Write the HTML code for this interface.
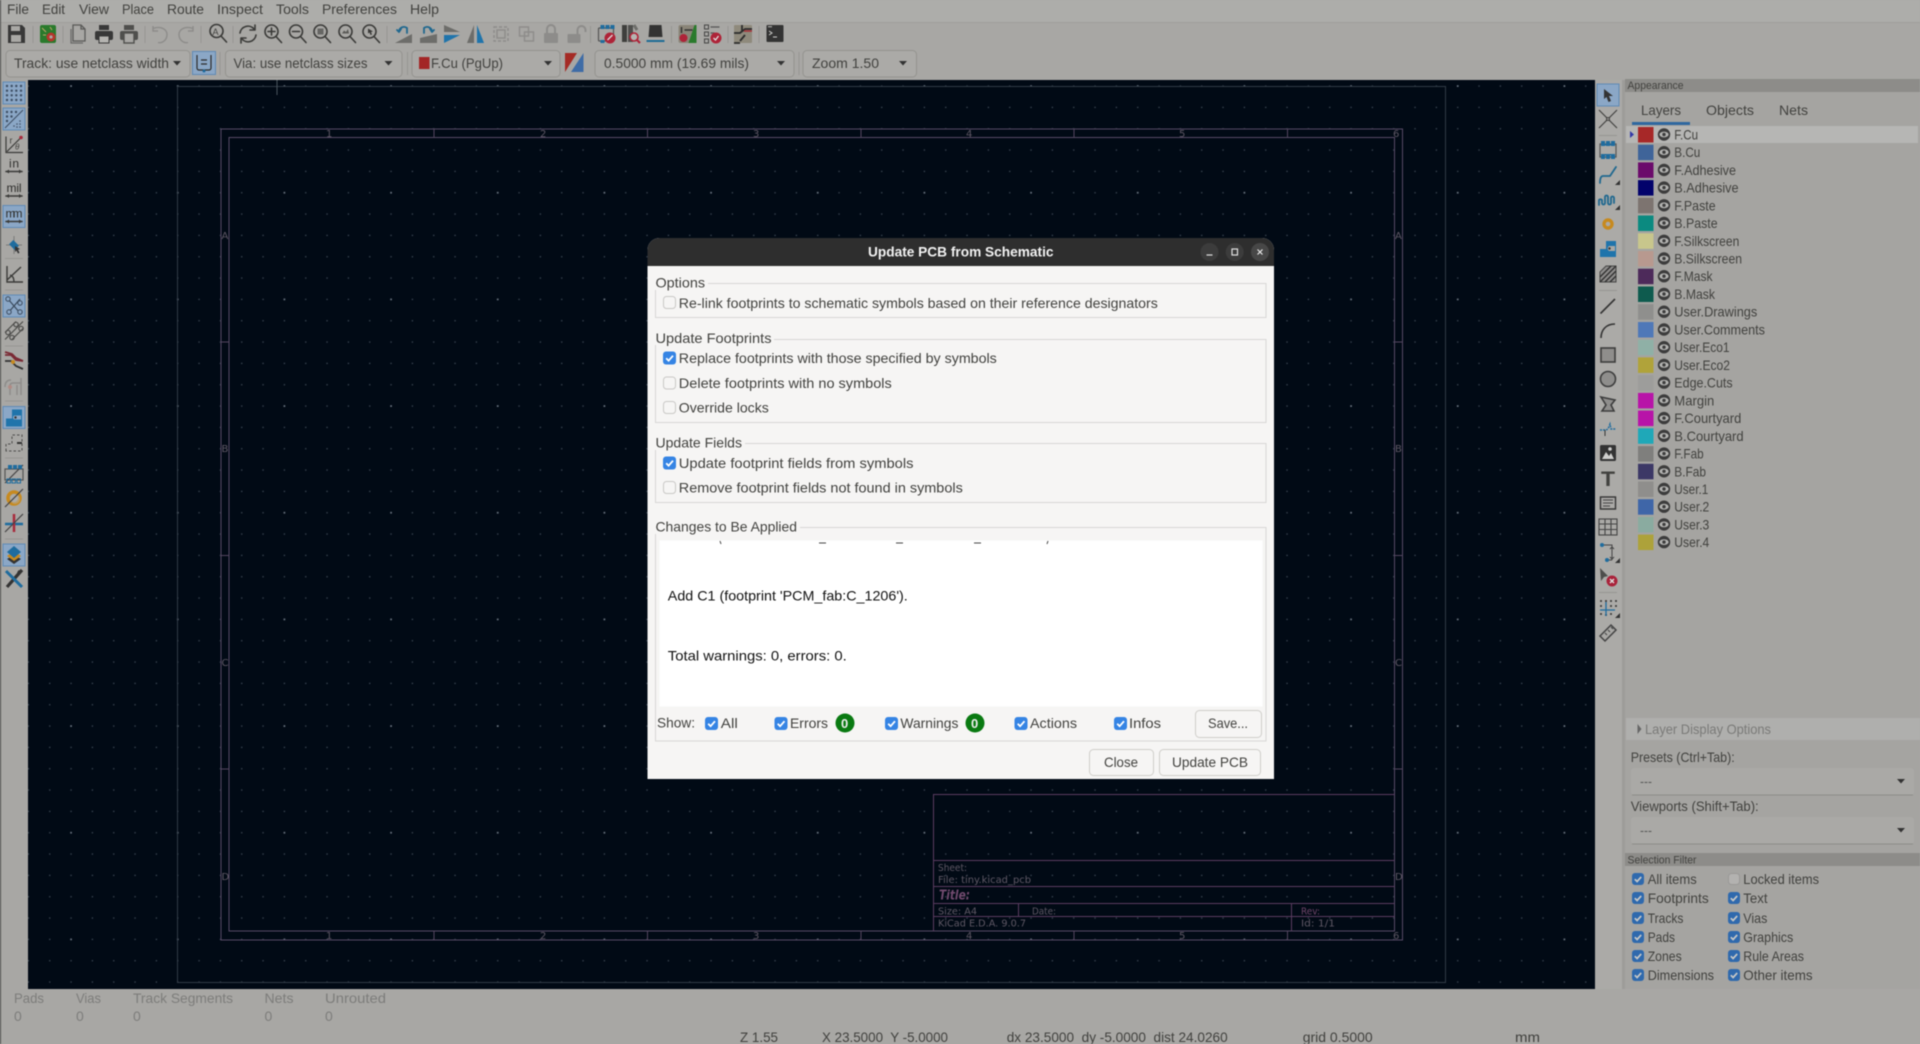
<!DOCTYPE html>
<html><head><meta charset="utf-8"><title>Update PCB from Schematic</title>
<style>
html,body{margin:0;padding:0;width:1920px;height:1044px;overflow:hidden;background:#a8a7a4}
svg{display:block;position:absolute;left:0;top:0;filter:blur(.45px)}
text{font-family:"Liberation Sans",sans-serif;font-size:14px;fill:#42423f;white-space:pre}
.d text{fill:#42423f}
.dim text{fill:#7d7d7b}
.cv text{font-family:"DejaVu Sans",sans-serif;font-size:10px;fill:#5e5764}
.cl{fill:none;stroke:#54455f;stroke-width:1}
.k{fill:none;stroke:#3a3a38;stroke-width:1.6;stroke-linecap:round;stroke-linejoin:round}
.f{fill:none;stroke:#8d8c8a;stroke-width:1.4}
.b{fill:none;stroke:#20688f;stroke-width:1.8;stroke-linecap:round;stroke-linejoin:round}
</style></head><body>
<svg xmlns="http://www.w3.org/2000/svg" width="1920" height="1044" viewBox="0 0 1920 1044">
<defs>
<pattern id="g1" x="167" y="75.33" width="21.333" height="21.333" patternUnits="userSpaceOnUse"><rect x="10.1" y="10.1" width="1.3" height="1.3" fill="#3c4754"/></pattern>
<pattern id="g2" x="124.34" y="32.67" width="106.667" height="106.667" patternUnits="userSpaceOnUse"><rect x="52.6" y="52.6" width="1.6" height="1.6" fill="#6f7985"/></pattern>
<g id="eye"><circle r="6.2" fill="#3c3c3c"/><ellipse rx="4.6" ry="2.9" fill="#b3b3b1"/><circle r="1.7" fill="#3c3c3c"/></g>
<g id="cc"><rect width="13" height="13" rx="3" fill="#3584e4"/><path d="M3.2 6.8l2.4 2.4 4.4-5" fill="none" stroke="#fff" stroke-width="1.8"/></g>
<g id="cu"><rect x=".5" y=".5" width="12" height="12" rx="3" fill="#f6f5f4" stroke="#c9c8c6"/></g>
<g id="pc"><rect width="12" height="12" rx="3" fill="#2f69ad"/><path d="M2.8 6.2l2.3 2.3 4.1-4.6" fill="none" stroke="#c9c9c7" stroke-width="1.7"/></g>
<g id="tg"><rect x="-11" y="-11" width="22" height="22" fill="#8ba7c6" stroke="#5f8ab5"/></g>
<g id="mg"><circle cx="-1.5" cy="-2" r="6.5" class="k"/><path d="M3 3l5.5 6" class="k" stroke-width="2"/></g>
<g id="ar"><polygon points="-4,-2 4,-2 0,2.5" fill="#333"/></g>
<g id="cor"><polygon points="3,0 3,-5 -2,0" fill="#333" transform="translate(9,10)"/></g>
</defs>

<!-- chrome -->
<rect width="1920" height="1044" fill="#a8a7a4"/>
<rect width="1920" height="22" fill="#adadaa"/>
<rect y="22" width="1920" height="1" fill="#9f9e9b"/>
<rect width="1" height="1044" fill="#4a4a48"/>

<!-- canvas -->
<rect x="28" y="80" width="1567" height="909" fill="#010a15"/>
<rect x="28" y="80" width="1567" height="909" fill="url(#g1)"/>
<rect x="28" y="80" width="1567" height="909" fill="url(#g2)"/>
<g class="cv">
<rect x="177.5" y="86.5" width="1268" height="896" fill="none" stroke="#303a45"/>
<path d="M277 80v15" stroke="#4a545e"/>
<rect x="221" y="129" width="1181.5" height="811" fill="none" stroke="#574a66"/>
<rect x="229" y="137.5" width="1165.5" height="793.5" fill="none" stroke="#574a66"/>
<path class="cl" d="M434 129v8.5M647.5 129v8.5M861 129v8.5M1074 129v8.5M1287.5 129v8.5M434 931v9M647.500 931v9M861 931v9M1074 931v9M1287.5 931v9M221 342h8M221 555.500h8M221 769h8M1394.5 342h8M1394.5 555.500h8M1394.5 769h8"/>
<path d="M933.5 931V794.5H1394.5M933.5 860.5H1394.5M933.5 886.5H1394.5M933.5 903.5H1394.5M933.5 916.5H1394.5M1018.5 903.5v13M1291.5 903.5v27.5" fill="none" stroke="#5b3b60"/>
<text x="326" y="137">1</text><text x="540" y="137">2</text><text x="753" y="137">3</text><text x="966" y="137">4</text><text x="1179" y="137">5</text><text x="1393" y="137">6</text>
<text x="966" y="939">4</text><text x="1179" y="939">5</text><text x="1393" y="939">6</text><text x="540" y="939">2</text><text x="326" y="939">1</text><text x="753" y="939">3</text>
<text x="221.5" y="239">A</text><text x="221.5" y="452">B</text><text x="221.5" y="666">C</text><text x="221.5" y="880">D</text>
<text x="1395" y="239">A</text><text x="1395" y="452">B</text><text x="1395" y="666">C</text><text x="1395" y="880">D</text>
<text x="938" y="871" textLength="29" lengthAdjust="spacingAndGlyphs">Sheet:</text>
<text x="938" y="883" textLength="93" lengthAdjust="spacingAndGlyphs">File: tiny.kicad_pcb</text>
<text x="939" y="899.500" textLength="31" lengthAdjust="spacingAndGlyphs" style="font-size:13px;font-weight:bold;font-style:italic;fill:#714a6e">Title:</text>
<text x="938" y="914.500" textLength="39" lengthAdjust="spacingAndGlyphs">Size: A4</text>
<text x="1032" y="914.500" textLength="24" lengthAdjust="spacingAndGlyphs">Date:</text>
<text x="1301" y="914.500" textLength="19" lengthAdjust="spacingAndGlyphs" style="fill:#6e4468">Rev:</text>
<text x="938" y="926.500" textLength="88" lengthAdjust="spacingAndGlyphs">KiCad E.D.A. 9.0.7</text>
<text x="1301" y="926.500" textLength="34" lengthAdjust="spacingAndGlyphs">Id: 1/1</text>
</g>

<!-- menu -->
<g>
<text x="7" y="14" textLength="22" lengthAdjust="spacingAndGlyphs">File</text>
<text x="42" y="14" textLength="23" lengthAdjust="spacingAndGlyphs">Edit</text>
<text x="79" y="14" textLength="30" lengthAdjust="spacingAndGlyphs">View</text>
<text x="122" y="14" textLength="32" lengthAdjust="spacingAndGlyphs">Place</text>
<text x="167" y="14" textLength="37" lengthAdjust="spacingAndGlyphs">Route</text>
<text x="217" y="14" textLength="46" lengthAdjust="spacingAndGlyphs">Inspect</text>
<text x="276" y="14" textLength="33" lengthAdjust="spacingAndGlyphs">Tools</text>
<text x="322" y="14" textLength="75" lengthAdjust="spacingAndGlyphs">Preferences</text>
<text x="410" y="14" textLength="29" lengthAdjust="spacingAndGlyphs">Help</text>
</g>

<!-- toolbar 1 -->
<g>
<path d="M33 26v17M63 26v17M145 26v17M201 26v17M233 26v17M387 26v17M590.5 26v17M671.5 26v17M728 26v17M759 26v17" stroke="#979693"/>
<g transform="translate(16,34)"><path d="M-8-9H6L9-6V9H-8Z" fill="#383838"/><rect x="-5" y="-8" width="9" height="5" fill="#a9a8a5"/><rect x="-5" y="1" width="10" height="7" fill="#a9a8a5"/></g>
<g transform="translate(48,34)"><rect x="-8" y="-9" width="16" height="18" rx="2" fill="#2a7a2c"/><circle cx="3" cy="3" r="4.5" fill="#b5362c"/><circle cx="3" cy="3" r="1.6" fill="#a9a8a5"/><path d="M-6-6l4 4M-5 1h3M2-7l2 3" stroke="#c1a66a"/></g>
<g transform="translate(79,34)"><path d="M-6-9H2L6-5V7H-6ZM2-9v4H6" fill="none" stroke="#5a5a58" stroke-width="1.3"/><path d="M-8-5V9H4" fill="none" stroke="#6a6a68" stroke-width="1.2"/></g>
<g transform="translate(104,34)"><rect x="-9" y="-3" width="18" height="9" rx="2" fill="#383838"/><rect x="-5" y="-9" width="10" height="5" fill="#383838"/><rect x="-5" y="2" width="10" height="7" fill="#b5b4b1" stroke="#383838"/></g>
<g transform="translate(129,34)"><rect x="-9" y="-3" width="18" height="9" rx="2" fill="#4f4f4d"/><rect x="-5" y="-9" width="10" height="5" fill="#4f4f4d"/><rect x="-5" y="-1" width="10" height="10" fill="#a9a8a5" stroke="#4f4f4d" stroke-width="1.4"/></g>
<path d="M153 28.500c8-3 14 1 14 6s-4 9-9 8M153 26v5h5" class="f"/>
<path d="M193 28.500c-8-3-14 1-14 6s4 9 9 8M193 26v5h-5" class="f"/>
<g transform="translate(218,33)"><use href="#mg"/><text x="-5.500" y="2" style="font-size:9px">A</text></g>
<g transform="translate(248,34)"><path d="M-8-1a8 8 0 0 1 14-4M8 1a8 8 0 0 1-14 4" class="k"/><path d="M7-9v5h-5M-7 9v-5h5" class="k"/></g>
<g transform="translate(273,33.500)"><use href="#mg"/><path d="M-5-2h7M-1.500-5.500v7" class="k" stroke-width="1.300"/></g>
<g transform="translate(297.500,33.500)"><use href="#mg"/><path d="M-5-2h7" class="k" stroke-width="1.300"/></g>
<g transform="translate(322,33.500)"><use href="#mg"/><rect x="-4.500" y="-5" width="6" height="6" fill="#3a3a38" opacity=".6"/></g>
<g transform="translate(347,33.500)"><use href="#mg"/><path d="M-5 0l2-3 2 1.500 2-3 1 4.500Z" fill="#3a3a38" opacity=".7"/></g>
<g transform="translate(371,33.500)"><use href="#mg"/><path d="M-3-5l5 3-2 .5 1 2.500-1.500.5-1-2.500-1.500 1Z" fill="#3a3a38"/></g>
<g transform="translate(403,34)"><path d="M-8 9L9 9 9 0Z" fill="#6d6d6a"/><path d="M-4-3a5 5 0 0 1 8-3v5" class="b"/><path d="M-6-4l2 2 2-3" class="b" stroke-width="1.300"/></g>
<g transform="translate(428,34)"><path d="M-8 9L9 9 9 0-8 4Z" fill="#6d6d6a"/><path d="M4-3a5 5 0 0 0-8-3v5" class="b"/><path d="M6-4l-2 2-2-3" class="b" stroke-width="1.300"/></g>
<g transform="translate(452,34)"><path d="M-8-9L8-2H-8Z" fill="#6d6d6a"/><path d="M-8 1H8L-8 9Z" fill="#1f74ab"/></g>
<g transform="translate(476,34)"><path d="M-2-9V9H-9Z" fill="#6d6d6a"/><path d="M1-9V9H8Z" fill="#1f74ab"/></g>
<g transform="translate(501,34)"><rect x="-7" y="-7" width="14" height="14" class="f" stroke-dasharray="3 2"/><rect x="-4" y="-4" width="8" height="8" class="f"/></g>
<g transform="translate(526.500,34)"><rect x="-7" y="-7" width="9" height="9" class="f"/><rect x="-2" y="-2" width="9" height="9" class="f"/></g>
<g transform="translate(551,34)"><rect x="-7" y="-1" width="14" height="10" rx="1" fill="#8d8c8a"/><path d="M-4-1v-4a4 4 0 0 1 8 0v4" fill="none" stroke="#8d8c8a" stroke-width="2"/></g>
<g transform="translate(575.500,34)"><rect x="-8" y="0" width="13" height="9" rx="1" fill="#8d8c8a"/><path d="M2 0v-4a4 4 0 0 1 8 0v2" fill="none" stroke="#8d8c8a" stroke-width="2"/></g>
<g transform="translate(606.500,34)"><rect x="-8" y="-6" width="15" height="13" rx="1" fill="none" stroke="#555" stroke-width="1.200"/><rect x="-6" y="-9" width="4" height="4" fill="#1f6c9e"/><rect x="-1" y="-9" width="4" height="4" fill="#1f6c9e"/><rect x="4" y="-9" width="4" height="4" fill="#1f6c9e"/><rect x="-6" y="6" width="4" height="3" fill="#1f6c9e"/><circle cx="3.500" cy="4" r="5.500" fill="#ae2338"/><path d="M1 6l5-5" stroke="#ddd" stroke-width="1.300"/></g>
<g transform="translate(631,34)"><rect x="-9" y="-9" width="5" height="17" fill="#3f3f3d"/><rect x="-3" y="-9" width="5" height="17" fill="#4f4f4d"/><path d="M3-9l3 5" stroke="#6d6d6a" stroke-width="3"/><circle cx="3" cy="3" r="4" fill="#b5b4b1" stroke="#ae2338" stroke-width="1.600"/><path d="M6 6l3 3" stroke="#ae2338" stroke-width="2"/></g>
<g transform="translate(655.500,34)"><path d="M-6-9H6L7 3H-7Z" fill="#333"/><rect x="-9" y="6" width="18" height="2" fill="#1e6c95"/></g>
<g transform="translate(687.500,34)"><rect x="-9" y="-9" width="18" height="18" rx="2" fill="#8a8578"/><path d="M1 9L7-9H9V9Z" fill="#2a7a2c"/><circle cx="-4" cy="4" r="4" fill="#ae2338"/><path d="M-6-7v6M-3-4l8 0" stroke="#333" stroke-width="1.500"/></g>
<g transform="translate(712.500,34)"><path d="M-2-7h9M-2-1h4" stroke="#555" stroke-width="1.200"/><rect x="-8" y="-9" width="4" height="4" fill="none" stroke="#444"/><rect x="-8" y="-2" width="4" height="4" fill="none" stroke="#444"/><rect x="-8" y="5" width="4" height="4" fill="none" stroke="#444"/><circle cx="3.500" cy="4" r="5.500" fill="#ae2338"/><path d="M1 4l2 2 3-4" fill="none" stroke="#ddd" stroke-width="1.300"/></g>
<g transform="translate(743,34)"><rect x="-9" y="-9" width="18" height="18" rx="1" fill="#8f8a7c"/><path d="M-1-9V-3M-9-1H-3L2-5H9M2 1L-3 7M-9 9H-3" fill="none" stroke="#2c2c2c" stroke-width="1.800"/><path d="M1-3h8" stroke="#a8323a" stroke-width="1.600"/></g>
<g transform="translate(775,34)"><rect x="-8.500" y="-9" width="17" height="17" rx="1" fill="#333"/><rect x="-7" y="-8" width="4" height="1.400" fill="#9b9b99"/><path d="M-6-3l3 2-3 2M-2 3h4" fill="none" stroke="#cfcfcd"/></g>
</g>

<!-- toolbar 2 -->
<g>
<path d="M407.500 52v23M799 52v23M220 52v23" stroke="#979693"/>
<rect x="6" y="50.500" width="184" height="26.500" rx="4" fill="#abaaa7" stroke="#94938f"/>
<text x="14" y="68" textLength="155" lengthAdjust="spacingAndGlyphs">Track: use netclass width</text>
<use href="#ar" x="177" y="63"/>
<rect x="192.500" y="51.500" width="23" height="23" fill="#8ba7c6" stroke="#5f8ab5"/>
<path d="M197 55v13a2 2 0 0 0 2 2h10a2 2 0 0 0 2-2V55M201 60h6M201 64h6" fill="none" stroke="#2d2d2b" stroke-width="1.200"/><circle cx="204" cy="71" r="1.500" fill="#1f6c9e"/>
<rect x="225.500" y="50.500" width="176.500" height="26.500" rx="4" fill="#abaaa7" stroke="#94938f"/>
<text x="233.500" y="68" textLength="134" lengthAdjust="spacingAndGlyphs">Via: use netclass sizes</text>
<use href="#ar" x="388.500" y="63"/>
<rect x="412" y="50.500" width="148" height="26.500" rx="4" fill="#abaaa7" stroke="#94938f"/>
<rect x="419" y="57" width="10.500" height="12" fill="#a32626"/>
<text x="431" y="68" textLength="72" lengthAdjust="spacingAndGlyphs">F.Cu (PgUp)</text>
<use href="#ar" x="548" y="63"/>
<path d="M565 53H577L565 72Z" fill="#a52b25"/><path d="M583.500 53V72H571L583.500 53Z" fill="#3f6ca6"/>
<rect x="595" y="50.500" width="199" height="26.500" rx="4" fill="#abaaa7" stroke="#94938f"/>
<text x="604" y="68" textLength="145" lengthAdjust="spacingAndGlyphs">0.5000 mm (19.69 mils)</text>
<use href="#ar" x="781" y="63"/>
<rect x="803" y="50.500" width="113.500" height="26.500" rx="4" fill="#abaaa7" stroke="#94938f"/>
<text x="812" y="68" textLength="67" lengthAdjust="spacingAndGlyphs">Zoom 1.50</text>
<use href="#ar" x="903" y="63"/>
</g>

<!-- left toolbar -->
<g>
<path d="M5 258.500h18M5 290h18M5 346h18M5 401h18M5 458h18M5 539h18" stroke="#979693"/>
<g transform="translate(14,93)"><use href="#tg"/><g fill="#3d4e63"><circle cx="-7" cy="-7" r="1.200"/><circle cx="-2.300" cy="-7" r="1.200"/><circle cx="2.300" cy="-7" r="1.200"/><circle cx="7" cy="-7" r="1.200"/><circle cx="-7" cy="-2.300" r="1.200"/><circle cx="-2.300" cy="-2.300" r="1.200"/><circle cx="2.300" cy="-2.300" r="1.200"/><circle cx="7" cy="-2.300" r="1.200"/><circle cx="-7" cy="2.300" r="1.200"/><circle cx="-2.300" cy="2.300" r="1.200"/><circle cx="2.300" cy="2.300" r="1.200"/><circle cx="7" cy="2.300" r="1.200"/><circle cx="-7" cy="7" r="1.200"/><circle cx="-2.300" cy="7" r="1.200"/><circle cx="2.300" cy="7" r="1.200"/><circle cx="7" cy="7" r="1.200"/></g></g>
<g transform="translate(14,119)"><use href="#tg"/><path d="M-9 9L9-9" stroke="#3d4e63"/><g fill="#3d4e63"><circle cx="-7" cy="-7" r="1.200"/><circle cx="-2.500" cy="-7" r="1.200"/><circle cx="2" cy="-7" r="1.200"/><circle cx="-7" cy="-2.500" r="1.200"/><circle cx="-2.500" cy="-2.500" r="1.200"/><circle cx="-7" cy="2" r="1.200"/><circle cx="6" cy="2" r=".8"/><circle cx="3" cy="5" r=".8"/><circle cx="6" cy="5" r=".8"/><circle cx="0" cy="7" r=".8"/><circle cx="3" cy="8" r=".8"/><circle cx="6" cy="8" r=".8"/></g></g>
<g transform="translate(14,144.500)"><path d="M-8-8V8H9M-7 7L7-7" fill="none" stroke="#3a3a38" stroke-width="1.200"/><circle cx="7" cy="-7" r="1.800" fill="#a82a3c"/><text x="-4.500" y="-1" style="font-size:9px">r</text><text x="1" y="5" style="font-size:8px;font-style:italic">θ</text></g>
<g transform="translate(14,166.500)"><text x="-5" y="1" style="font-size:12px;fill:#2e2e2c" textLength="10">in</text><path d="M-8 5H8" class="k" stroke-width="1.200"/><path d="M-8 5l3-2v4ZM8 5l-3-2v4Z" fill="#3a3a38"/></g>
<g transform="translate(14,191)"><text x="-7.500" y="1" style="font-size:12px;fill:#2e2e2c" textLength="15">mil</text><path d="M-8 5H8" class="k" stroke-width="1.200"/><path d="M-8 5l3-2v4ZM8 5l-3-2v4Z" fill="#3a3a38"/></g>
<g transform="translate(14,216.500)"><use href="#tg"/><text x="-8.500" y="1" style="font-size:12px;fill:#2e2e2c" textLength="17">mm</text><path d="M-8 5H8" class="k" stroke-width="1.200"/><path d="M-8 5l3-2v4ZM8 5l-3-2v4Z" fill="#3a3a38"/></g>
<g transform="translate(14,245)"><path d="M0-9V9M-8 0H8" stroke="#7a7a78"/><path d="M-4-3H4V3H-4Z" fill="#1f6c9e" transform="rotate(45)"/><path d="M1 1l5 3-2 .8 1.500 3-1.500.7-1.500-3-1.500 1.500Z" fill="#333"/></g>
<g transform="translate(14,274)"><path d="M-7-8V8H9M-7 6L7-7M-4 1q4 1 4 7" fill="none" stroke="#3a3a38" stroke-width="1.400"/></g>
<g transform="translate(14,306)"><use href="#tg"/><path d="M-6-7L6 7M6-7L-6 7" stroke="#3a4a5c" stroke-width="1.200"/><circle cx="-6" cy="-7" r="2.200" fill="#8ba7c6" stroke="#3a4a5c"/><circle cx="6" cy="-3" r="2.200" fill="#8ba7c6" stroke="#3a4a5c"/><circle cx="-5" cy="6" r="2.200" fill="#8ba7c6" stroke="#3a4a5c"/><circle cx="6" cy="6" r="2.200" fill="#8ba7c6" stroke="#3a4a5c"/></g>
<g transform="translate(14,330.500)" fill="none" stroke="#4d4d4b" stroke-width="1.200"><path d="M-9 9L9-9M-9 2L2-9M-2 9L9-2"/><circle cx="-6" cy="2" r="2.200"/><circle cx="2" cy="-6" r="2.200"/><circle cx="-2" cy="7" r="2.200"/><circle cx="7" cy="-2" r="2.200"/></g>
<g transform="translate(14,361)" fill="none" stroke-width="1.800"><path d="M-9-6h6l5 5 7 1" stroke="#7a2a34"/><path d="M-9 0l6 0 5 5 7 3" stroke="#333"/><path d="M-9-9l7 2 4 4 7 3" stroke="#7a2a34"/><circle cx="-1" cy="1" r="2" fill="#c78a1f" stroke="none"/></g>
<g transform="translate(14,387)" fill="none" stroke="#8d8c8a" stroke-width="1.500"><path d="M-9 0q0-7 6-7M-4 8V-1q0-3 3-3h8M3 8V-2M7 8V-9"/><circle cx="-4" cy="0" r="2" fill="#b08b85" stroke="none"/></g>
<g transform="translate(14,417.500)"><use href="#tg"/><path d="M-8 9V1H-2V-8H8V9Z" fill="#1f74ab"/><path d="M7-2H1a2 2 0 0 0 0 4H7Z" fill="#8ba7c6"/><circle cx="1.500" cy="0" r="1.200" fill="#333"/></g>
<g transform="translate(14,443)"><path d="M-8 8V1H-2V-8H8V8Z" fill="none" stroke="#4d4d4b" stroke-dasharray="2.500 2"/><path d="M3 0H8" stroke="#333" stroke-width="2"/></g>
<g transform="translate(14,474)"><rect x="-9" y="-5" width="18" height="11" fill="none" stroke="#555" stroke-width="1.200"/><path d="M-9 9L9-9" stroke="#444" stroke-width="1.200"/><g fill="#1f6c9e"><rect x="-6" y="-9" width="4" height="4"/><rect x="-1" y="-9" width="4" height="4"/><rect x="4" y="-9" width="4" height="4"/></g><g fill="none" stroke="#1f6c9e"><rect x="-7" y="5" width="3.500" height="4"/><rect x="-2" y="5" width="3.500" height="4"/><rect x="3" y="5" width="3.500" height="4"/></g></g>
<g transform="translate(14,498)"><circle r="6" fill="none" stroke="#c78a1f" stroke-width="3.500"/><circle cx="1" cy="1" r="5" fill="#b0afac" opacity=".5"/><path d="M-9 9L9-9" stroke="#444" stroke-width="1.200"/></g>
<g transform="translate(14,523)"><path d="M-9 1H9" stroke="#1f6c9e" stroke-width="2.500"/><path d="M0-9V9" stroke="#a82a3c" stroke-width="2.500"/><path d="M-9 9L9-9" stroke="#444" stroke-width="1.200"/></g>
<g transform="translate(14,555)"><use href="#tg"/><path d="M-7 4L0 9 7 4 0 0Z" fill="#333"/><path d="M-7 1L0 6 7 1 0-4Z" fill="#c78a1f"/><path d="M-7-3L0-9 7-3 0 3Z" fill="#1f6c9e"/></g>
<g transform="translate(14,579)"><path d="M8-9L0 0-7 8" stroke="#333" stroke-width="3.200" fill="none"/><path d="M-8-8L8 8" stroke="#1f6c9e" stroke-width="3" fill="none"/><path d="M5-9a4 4 0 0 0-1 6l4-4" fill="#333"/></g>
</g>

<!-- right toolbar -->
<rect x="1595" y="80" width="27" height="909" fill="#abaaa7"/>
<rect x="1622" y="80" width="3" height="909" fill="#9d9c99"/>
<g>
<path d="M1599 135.500h18M1599 290.500h18M1599 592.500h18" stroke="#979693"/>
<g transform="translate(1608,95)"><use href="#tg"/><path d="M-4-6L5 1H1L3 6 0.500 7-1.500 2-4 4Z" fill="#333"/></g>
<g transform="translate(1608,119)"><path d="M-9-9L-2-2M9-9L2-2M-9 9L-2 2M9 9L2 2" fill="none" stroke="#3e3e3c" stroke-width="1.100"/><path d="M-2-2Q0-.5 2-2Q.5 0 2 2Q0 .5-2 2Q-.5 0-2-2Z" fill="none" stroke="#3e3e3c"/></g>
<g transform="translate(1608,150)"><rect x="-8" y="-6" width="16" height="13" fill="none" stroke="#555" stroke-width="1.200"/><g fill="#1f6c9e"><rect x="-7" y="-9" width="4" height="5"/><rect x="-2" y="-9" width="4" height="5"/><rect x="3" y="-9" width="4" height="5"/><rect x="-7" y="4" width="4" height="5"/><rect x="-2" y="4" width="4" height="5"/><rect x="3" y="4" width="4" height="5"/><rect x="-7" y="-6" width="14" height="1.500"/><rect x="-7" y="4" width="14" height="1.500"/></g></g>
<g transform="translate(1608,175)"><path d="M-8 8Q-8 1-5 1H2L8-8" class="b"/><use href="#cor"/></g>
<g transform="translate(1608,200)"><path d="M-9 5V0a2 2 0 0 1 3 0v3a1.500 1.500 0 0 0 3 0v-6a1.500 1.500 0 0 1 3 0v6a1.500 1.500 0 0 0 3 0v-5a1.500 1.500 0 0 1 3 0v5" class="b" stroke-width="1.500"/><use href="#cor"/></g>
<g transform="translate(1608,224)"><circle r="4" fill="none" stroke="#c78a1f" stroke-width="3.400"/></g>
<g transform="translate(1608,249)"><path d="M-8 8V0H-2V-8H8V8Z" fill="#1f74ab"/><path d="M7-3H1a3 3 0 0 0 0 5H7Z" fill="#a9a8a5"/><circle cx="1.500" cy="-.5" r="1.200" fill="#333"/></g>
<g transform="translate(1608,274)"><path d="M-8 8V-2L-2-8H8V8Z" fill="#8f8e8c" stroke="#444"/><path d="M-8 3L3-8M-8 8L8-8M-3 8L8-3M2 8L8 2" stroke="#333" stroke-width="1.500"/></g>
<path d="M1600.500 313.500L1615 299" stroke="#333" stroke-width="1.600"/>
<path d="M1601 338c0-8 5-14 14-14" fill="none" stroke="#333" stroke-width="1.600"/>
<rect x="1601" y="348" width="14" height="14" fill="#8f8e8c" stroke="#3d3d3d" stroke-width="1.600"/>
<circle cx="1608" cy="379" r="7.500" fill="#8f8e8c" stroke="#3d3d3d" stroke-width="1.600"/>
<path d="M1601 397L1615 400 1611 405 1614 411 1602 411 1606 405Z" fill="#8f8e8c" stroke="#3d3d3d" stroke-width="1.600"/>
<g transform="translate(1608,429)"><path d="M-8 1H-2L0 0 2-5 3 0 8 0" fill="none" stroke="#1f6c9e" stroke-width="1.400" stroke-dasharray="2 1"/><path d="M-3 1V7" stroke="#333"/></g>
<g transform="translate(1608,453)"><rect x="-8" y="-8" width="16" height="16" rx="1.500" fill="#333"/><path d="M-6 6L-2-1 1 3 3 0 6 6Z" fill="#cfcfcd"/><circle cx="2" cy="-4" r="1.800" fill="#cfcfcd"/></g>
<text x="1601" y="486" style="font-size:21px;font-weight:bold" textLength="14" lengthAdjust="spacingAndGlyphs">T</text>
<g transform="translate(1608,503)"><rect x="-7.500" y="-6" width="15" height="12" fill="none" stroke="#333" stroke-width="1.400"/><path d="M-5-3H5M-5 0H5M-5 3H2" stroke="#444"/></g>
<g transform="translate(1608,527)" fill="none" stroke="#444" stroke-width="1.100"><rect x="-9" y="-8" width="18" height="16"/><path d="M-9-3H9M-9 2.500H9M-3-8V8M3-8V8"/></g>
<g transform="translate(1608,553)"><path d="M-6-8H4V7M2-4l2-2 2 2M2 4l2 2 2-2M-1 7H4" fill="none" stroke="#444"/><circle cx="-6" cy="-8" r="2" fill="#1f6c9e"/><circle cx="-1" cy="7" r="2" fill="#1f6c9e"/><use href="#cor"/></g>
<g transform="translate(1608,577)"><path d="M-8-9L0-1-4 0-7 4Z" fill="#4d4d4b"/><circle cx="4" cy="4" r="5.500" fill="#a9223a"/><path d="M2 2l4 4M6 2l-4 4" stroke="#ddd" stroke-width="1.400"/></g>
<g transform="translate(1608,608)"><g fill="#333"><circle cx="-7" cy="-7" r="1"/><circle cx="-2" cy="-7" r="1"/><circle cx="3" cy="-7" r="1"/><circle cx="8" cy="-7" r="1"/><circle cx="-7" cy="-2" r="1"/><circle cx="3" cy="-2" r="1"/><circle cx="8" cy="-2" r="1"/><circle cx="-7" cy="6" r="1"/><circle cx="3" cy="6" r="1"/><circle cx="-2" cy="7" r="1"/></g><path d="M-8 2H7M-2-6V8" stroke="#1f6c9e" stroke-width="1.300"/><use href="#cor"/></g>
<g transform="translate(1608,633)"><path d="M-8 3L3-8 8-3-3 8Z" fill="#a9a8a5" stroke="#444" stroke-width="1.500"/><path d="M-3 0l2 2M0-3l2 2M3-6l2 2" stroke="#444"/></g>
</g>

<!-- appearance panel -->
<rect x="1625" y="79" width="295" height="910" fill="#a5a4a1"/>
<rect x="1625" y="79" width="295" height="13" fill="#8d8c89"/>
<text x="1627.500" y="89" textLength="56" lengthAdjust="spacingAndGlyphs" style="font-size:11px">Appearance</text>
<text x="1641" y="115" textLength="40" lengthAdjust="spacingAndGlyphs">Layers</text>
<text x="1706" y="115" textLength="48" lengthAdjust="spacingAndGlyphs">Objects</text>
<text x="1779" y="115" textLength="29" lengthAdjust="spacingAndGlyphs">Nets</text>
<rect x="1632" y="122" width="58" height="3" fill="#2f689f"/>
<rect x="1626" y="126" width="292" height="17" fill="#b6b6b4"/>
<polygon points="1630,131 1634,134.500 1630,138" fill="#3339a8"/>
<g id="layers">
<rect x="1638" y="127" width="15.500" height="15.500" fill="#a72828"/><use href="#eye" x="1664" y="134.500"/><text x="1674.300" y="139.500" textLength="23.700" lengthAdjust="spacingAndGlyphs">F.Cu</text>
<rect x="1638" y="144.700" width="15.500" height="15.500" fill="#3f6499"/><use href="#eye" x="1664" y="152.200"/><text x="1674.300" y="157.200" textLength="26" lengthAdjust="spacingAndGlyphs">B.Cu</text>
<rect x="1638" y="162.400" width="15.500" height="15.500" fill="#6b0b6b"/><use href="#eye" x="1664" y="169.900"/><text x="1674.300" y="174.900" textLength="61.700" lengthAdjust="spacingAndGlyphs">F.Adhesive</text>
<rect x="1638" y="180.100" width="15.500" height="15.500" fill="#02026b"/><use href="#eye" x="1664" y="187.600"/><text x="1674.300" y="192.600" textLength="64.300" lengthAdjust="spacingAndGlyphs">B.Adhesive</text>
<rect x="1638" y="197.800" width="15.500" height="15.500" fill="#7d7470"/><use href="#eye" x="1664" y="205.300"/><text x="1674.300" y="210.300" textLength="41.300" lengthAdjust="spacingAndGlyphs">F.Paste</text>
<rect x="1638" y="215.500" width="15.500" height="15.500" fill="#0b8a80"/><use href="#eye" x="1664" y="223"/><text x="1674.300" y="228" textLength="43.300" lengthAdjust="spacingAndGlyphs">B.Paste</text>
<rect x="1638" y="233.300" width="15.500" height="15.500" fill="#c8c68c"/><use href="#eye" x="1664" y="240.800"/><text x="1674.300" y="245.800" textLength="65" lengthAdjust="spacingAndGlyphs">F.Silkscreen</text>
<rect x="1638" y="251" width="15.500" height="15.500" fill="#b8998f"/><use href="#eye" x="1664" y="258.500"/><text x="1674.300" y="263.500" textLength="67.700" lengthAdjust="spacingAndGlyphs">B.Silkscreen</text>
<rect x="1638" y="268.700" width="15.500" height="15.500" fill="#4d2a5a"/><use href="#eye" x="1664" y="276.200"/><text x="1674.300" y="281.200" textLength="38.300" lengthAdjust="spacingAndGlyphs">F.Mask</text>
<rect x="1638" y="286.500" width="15.500" height="15.500" fill="#0e5b4e"/><use href="#eye" x="1664" y="294"/><text x="1674.300" y="299" textLength="40.700" lengthAdjust="spacingAndGlyphs">B.Mask</text>
<rect x="1638" y="304.200" width="15.500" height="15.500" fill="#8f8f8d"/><use href="#eye" x="1664" y="311.700"/><text x="1674.300" y="316.700" textLength="83" lengthAdjust="spacingAndGlyphs">User.Drawings</text>
<rect x="1638" y="322" width="15.500" height="15.500" fill="#4f78b8"/><use href="#eye" x="1664" y="329.500"/><text x="1674.300" y="334.500" textLength="90.700" lengthAdjust="spacingAndGlyphs">User.Comments</text>
<rect x="1638" y="339.700" width="15.500" height="15.500" fill="#8fb0a6"/><use href="#eye" x="1664" y="347.200"/><text x="1674.300" y="352.200" textLength="55.300" lengthAdjust="spacingAndGlyphs">User.Eco1</text>
<rect x="1638" y="357.400" width="15.500" height="15.500" fill="#b0a33a"/><use href="#eye" x="1664" y="364.900"/><text x="1674.300" y="369.900" textLength="55.700" lengthAdjust="spacingAndGlyphs">User.Eco2</text>
<rect x="1638" y="375.100" width="15.500" height="15.500" fill="#9d9d9b"/><use href="#eye" x="1664" y="382.600"/><text x="1674.300" y="387.600" textLength="58.300" lengthAdjust="spacingAndGlyphs">Edge.Cuts</text>
<rect x="1638" y="392.900" width="15.500" height="15.500" fill="#b814a8"/><use href="#eye" x="1664" y="400.400"/><text x="1674.300" y="405.400" textLength="40" lengthAdjust="spacingAndGlyphs">Margin</text>
<rect x="1638" y="410.600" width="15.500" height="15.500" fill="#b814a8"/><use href="#eye" x="1664" y="418.100"/><text x="1674.300" y="423.100" textLength="67" lengthAdjust="spacingAndGlyphs">F.Courtyard</text>
<rect x="1638" y="428.300" width="15.500" height="15.500" fill="#1fa8b8"/><use href="#eye" x="1664" y="435.800"/><text x="1674.300" y="440.800" textLength="69.300" lengthAdjust="spacingAndGlyphs">B.Courtyard</text>
<rect x="1638" y="446.100" width="15.500" height="15.500" fill="#7f7f7d"/><use href="#eye" x="1664" y="453.600"/><text x="1674.300" y="458.600" textLength="29.300" lengthAdjust="spacingAndGlyphs">F.Fab</text>
<rect x="1638" y="463.800" width="15.500" height="15.500" fill="#3c3866"/><use href="#eye" x="1664" y="471.300"/><text x="1674.300" y="476.300" textLength="31.700" lengthAdjust="spacingAndGlyphs">B.Fab</text>
<rect x="1638" y="481.500" width="15.500" height="15.500" fill="#8f8e8c"/><use href="#eye" x="1664" y="489"/><text x="1674.300" y="494" textLength="34" lengthAdjust="spacingAndGlyphs">User.1</text>
<rect x="1638" y="499.200" width="15.500" height="15.500" fill="#3f66a8"/><use href="#eye" x="1664" y="506.700"/><text x="1674.300" y="511.700" textLength="35" lengthAdjust="spacingAndGlyphs">User.2</text>
<rect x="1638" y="516.900" width="15.500" height="15.500" fill="#8aaba0"/><use href="#eye" x="1664" y="524.400"/><text x="1674.300" y="529.400" textLength="35" lengthAdjust="spacingAndGlyphs">User.3</text>
<rect x="1638" y="534.600" width="15.500" height="15.500" fill="#ada23a"/><use href="#eye" x="1664" y="542.100"/><text x="1674.300" y="547.100" textLength="35" lengthAdjust="spacingAndGlyphs">User.4</text>
</g>
<rect x="1626" y="718" width="294" height="22" fill="#afafad"/>
<polygon points="1637.500,724 1641.500,729 1637.500,734" fill="#666"/>
<text x="1645" y="734" textLength="126" lengthAdjust="spacingAndGlyphs" style="fill:#7a7a78">Layer Display Options</text>
<text x="1630.700" y="762" textLength="104" lengthAdjust="spacingAndGlyphs">Presets (Ctrl+Tab):</text>
<rect x="1631" y="768" width="283" height="27" rx="3" fill="#aaa9a6"/><path d="M1632 795h281" stroke="#8d8c89"/>
<text x="1640" y="786" textLength="12" lengthAdjust="spacingAndGlyphs" style="fill:#5c5c5a">---</text>
<use href="#ar" x="1901" y="781"/>
<text x="1630.700" y="811" textLength="128" lengthAdjust="spacingAndGlyphs">Viewports (Shift+Tab):</text>
<rect x="1631" y="817" width="283" height="27" rx="3" fill="#aaa9a6"/><path d="M1632 844h281" stroke="#8d8c89"/>
<text x="1640" y="835" textLength="12" lengthAdjust="spacingAndGlyphs" style="fill:#5c5c5a">---</text>
<use href="#ar" x="1901" y="830"/>
<rect x="1625" y="853" width="295" height="13" fill="#8d8c89"/>
<text x="1627.500" y="863.500" textLength="69" lengthAdjust="spacingAndGlyphs" style="font-size:11px">Selection Filter</text>
<use href="#pc" x="1632" y="873"/><text x="1647.700" y="884" textLength="49" lengthAdjust="spacingAndGlyphs">All items</text>
<use href="#pc" x="1632" y="892"/><text x="1647.700" y="903" textLength="61" lengthAdjust="spacingAndGlyphs">Footprints</text>
<use href="#pc" x="1632" y="912"/><text x="1647.700" y="923" textLength="35.700" lengthAdjust="spacingAndGlyphs">Tracks</text>
<use href="#pc" x="1632" y="931"/><text x="1647.700" y="942" textLength="27.300" lengthAdjust="spacingAndGlyphs">Pads</text>
<use href="#pc" x="1632" y="950"/><text x="1647.700" y="961" textLength="34" lengthAdjust="spacingAndGlyphs">Zones</text>
<use href="#pc" x="1632" y="969"/><text x="1647.700" y="980" textLength="66.300" lengthAdjust="spacingAndGlyphs">Dimensions</text>
<rect x="1728.500" y="873.500" width="11" height="11" rx="3" fill="#b3b2b0" stroke="#9a9997"/><text x="1743.300" y="884" textLength="75.700" lengthAdjust="spacingAndGlyphs">Locked items</text>
<use href="#pc" x="1728" y="892"/><text x="1743.300" y="903" textLength="24.300" lengthAdjust="spacingAndGlyphs">Text</text>
<use href="#pc" x="1728" y="912"/><text x="1743.300" y="923" textLength="24" lengthAdjust="spacingAndGlyphs">Vias</text>
<use href="#pc" x="1728" y="931"/><text x="1743.300" y="942" textLength="50" lengthAdjust="spacingAndGlyphs">Graphics</text>
<use href="#pc" x="1728" y="950"/><text x="1743.300" y="961" textLength="60.700" lengthAdjust="spacingAndGlyphs">Rule Areas</text>
<use href="#pc" x="1728" y="969"/><text x="1743.300" y="980" textLength="69.300" lengthAdjust="spacingAndGlyphs">Other items</text>

<!-- status -->
<g class="dim">
<text x="14" y="1003" textLength="30" lengthAdjust="spacingAndGlyphs">Pads</text>
<text x="76" y="1003" textLength="25" lengthAdjust="spacingAndGlyphs">Vias</text>
<text x="133" y="1003" textLength="100" lengthAdjust="spacingAndGlyphs">Track Segments</text>
<text x="264.500" y="1003" textLength="29" lengthAdjust="spacingAndGlyphs">Nets</text>
<text x="325" y="1003" textLength="61" lengthAdjust="spacingAndGlyphs">Unrouted</text>
<text x="14" y="1021">0</text><text x="76" y="1021">0</text><text x="133" y="1021">0</text><text x="264.500" y="1021">0</text><text x="325" y="1021">0</text>
</g>
<text x="740" y="1042" textLength="38" lengthAdjust="spacingAndGlyphs">Z 1.55</text>
<text x="822" y="1042" textLength="126" lengthAdjust="spacingAndGlyphs">X 23.5000  Y -5.0000</text>
<text x="1006.700" y="1042" textLength="221" lengthAdjust="spacingAndGlyphs">dx 23.5000  dy -5.0000  dist 24.0260</text>
<text x="1302.700" y="1042" textLength="70" lengthAdjust="spacingAndGlyphs">grid 0.5000</text>
<text x="1515" y="1042" textLength="25" lengthAdjust="spacingAndGlyphs">mm</text>

<!-- dialog -->
<g>
<path d="M647.500 779V250a12 12 0 0 1 12-12H1262a12 12 0 0 1 12 12V779Z" fill="#f6f5f4"/>
<path d="M647.500 266V250a12 12 0 0 1 12-12H1262a12 12 0 0 1 12 12V266Z" fill="#2e2e2e"/>
<text x="868" y="256.500" textLength="185.500" lengthAdjust="spacingAndGlyphs" style="font-weight:bold;fill:#f2f2f2">Update PCB from Schematic</text>
<circle cx="1209.500" cy="252" r="9" fill="#3c3c3c"/><circle cx="1234.700" cy="252" r="9" fill="#3c3c3c"/><circle cx="1260" cy="252" r="9" fill="#474747"/>
<path d="M1206.500 255h6" stroke="#e0e0e0" stroke-width="1.200"/><rect x="1232" y="249" width="5.500" height="6" fill="none" stroke="#e0e0e0" stroke-width="1.200"/><path d="M1257.500 249.500l5 5M1262.500 249.500l-5 5" stroke="#e8e8e8" stroke-width="1.200"/>

<g fill="none" stroke="#d8d7d5">
<rect x="655.500" y="283.500" width="610.500" height="34"/>
<rect x="655.500" y="339.500" width="610.500" height="83"/>
<rect x="655.500" y="443.500" width="610.500" height="59"/>
<rect x="655.500" y="527.500" width="610.500" height="213.500"/>
</g>
<g class="d">
<rect x="654" y="276" width="54" height="14" fill="#f6f5f4"/><text x="655.500" y="287.500" textLength="49.500" lengthAdjust="spacingAndGlyphs">Options</text>
<rect x="654" y="331" width="120" height="14" fill="#f6f5f4"/><text x="655.500" y="343" textLength="116" lengthAdjust="spacingAndGlyphs">Update Footprints</text>
<rect x="654" y="436" width="91" height="14" fill="#f6f5f4"/><text x="655.500" y="447.500" textLength="86.500" lengthAdjust="spacingAndGlyphs">Update Fields</text>
<rect x="654" y="520" width="146" height="14" fill="#f6f5f4"/><text x="655.500" y="531.500" textLength="141.500" lengthAdjust="spacingAndGlyphs">Changes to Be Applied</text>
<use href="#cu" x="663" y="296"/><text x="678.800" y="308" textLength="479" lengthAdjust="spacingAndGlyphs">Re-link footprints to schematic symbols based on their reference designators</text>
<use href="#cc" x="663" y="351.500"/><text x="678.800" y="363" textLength="318" lengthAdjust="spacingAndGlyphs">Replace footprints with those specified by symbols</text>
<use href="#cu" x="663" y="376.500"/><text x="678.800" y="388" textLength="213" lengthAdjust="spacingAndGlyphs">Delete footprints with no symbols</text>
<use href="#cu" x="663" y="401"/><text x="678.800" y="412.500" textLength="90" lengthAdjust="spacingAndGlyphs">Override locks</text>
<use href="#cc" x="663" y="456.500"/><text x="678.800" y="468" textLength="234.700" lengthAdjust="spacingAndGlyphs">Update footprint fields from symbols</text>
<use href="#cu" x="663" y="481"/><text x="678.800" y="492.500" textLength="284" lengthAdjust="spacingAndGlyphs">Remove footprint fields not found in symbols</text>
</g>
<rect x="659.500" y="540.500" width="603" height="166" fill="#fff"/>
<path d="M720 541l1 3M819 543h7M896 543h7M974 543h7M1048 541l-1 3" stroke="#444" stroke-width="1"/>
<text x="667.800" y="600.500" textLength="240" lengthAdjust="spacingAndGlyphs" style="fill:#111">Add C1 (footprint 'PCM_fab:C_1206').</text>
<text x="667.800" y="660.500" textLength="179" lengthAdjust="spacingAndGlyphs" style="fill:#111">Total warnings: 0, errors: 0.</text>
<g class="d">
<text x="657" y="727.500" textLength="38" lengthAdjust="spacingAndGlyphs">Show:</text>
<use href="#cc" x="705" y="717"/><text x="720.800" y="728" textLength="17" lengthAdjust="spacingAndGlyphs">All</text>
<use href="#cc" x="774.500" y="717"/><text x="790" y="728" textLength="38" lengthAdjust="spacingAndGlyphs">Errors</text>
<circle cx="845" cy="723" r="9.500" fill="#0a7a12"/><text x="841" y="728" style="fill:#eee;font-weight:bold;font-size:13px">0</text>
<use href="#cc" x="885" y="717"/><text x="900.400" y="728" textLength="58" lengthAdjust="spacingAndGlyphs">Warnings</text>
<circle cx="975" cy="723" r="9.500" fill="#0a7a12"/><text x="971" y="728" style="fill:#eee;font-weight:bold;font-size:13px">0</text>
<use href="#cc" x="1014.500" y="717"/><text x="1030" y="728" textLength="47" lengthAdjust="spacingAndGlyphs">Actions</text>
<use href="#cc" x="1114" y="717"/><text x="1129" y="728" textLength="32" lengthAdjust="spacingAndGlyphs">Infos</text>
<rect x="1195.500" y="710.500" width="66" height="27" rx="4" fill="#f6f5f4" stroke="#cfceca"/>
<text x="1208" y="728" textLength="40" lengthAdjust="spacingAndGlyphs">Save...</text>
<rect x="1089.500" y="749.500" width="64" height="26" rx="4" fill="#f6f5f4" stroke="#cfceca"/>
<text x="1104" y="767" textLength="34" lengthAdjust="spacingAndGlyphs">Close</text>
<rect x="1159.500" y="749.500" width="101" height="26" rx="4" fill="#f6f5f4" stroke="#cfceca"/>
<text x="1172" y="767" textLength="76" lengthAdjust="spacingAndGlyphs">Update PCB</text>
</g>
</g>
</svg>
</body></html>
